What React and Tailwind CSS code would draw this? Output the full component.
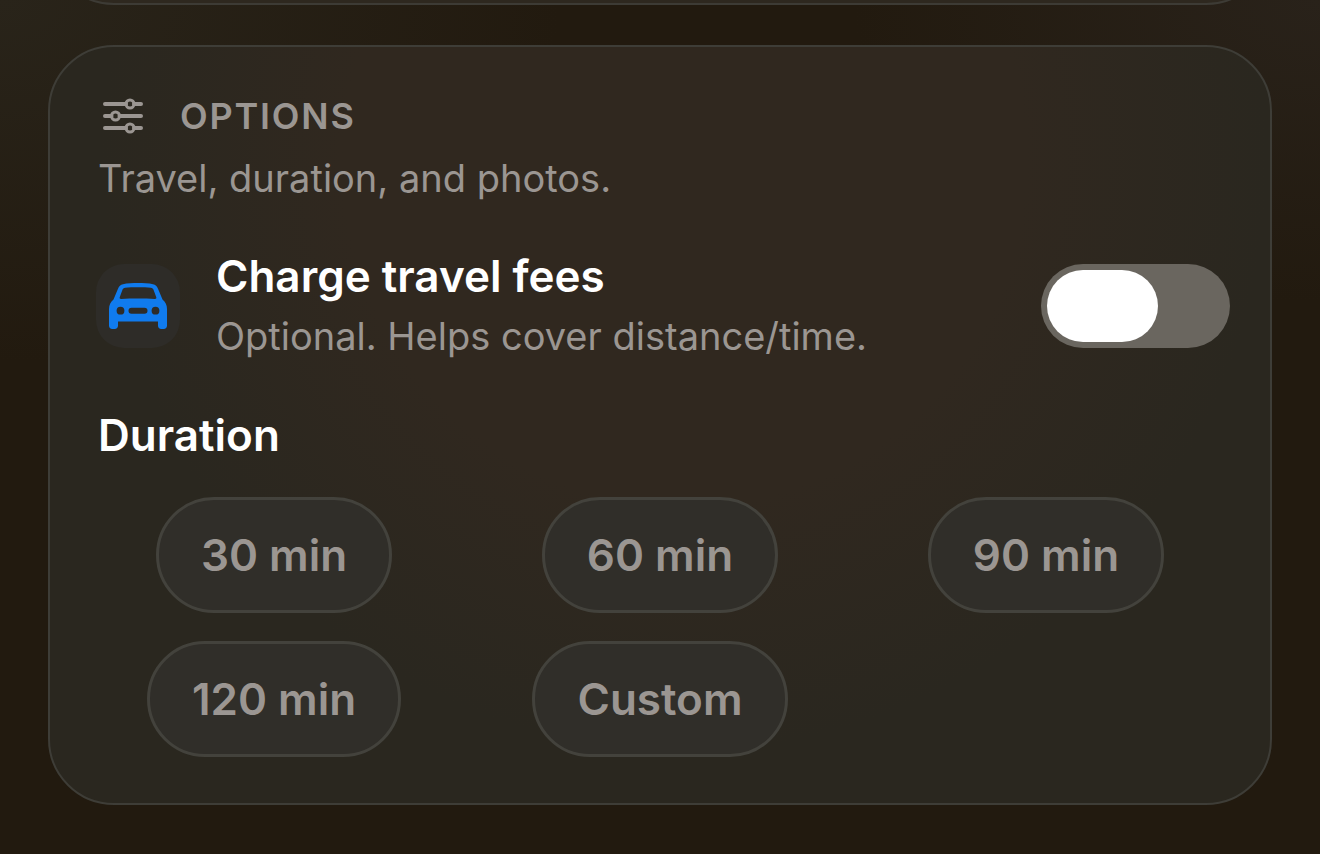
import { useState } from "react";

const durations = ["30 min", "60 min", "90 min", "120 min", "Custom"];

function SlidersIcon() {
  return (
    <svg className="h-9 w-[42px]" viewBox="0 0 42 36" fill="none" stroke="currentColor" strokeWidth="4" strokeLinecap="round" aria-hidden="true">
      <path d="M3 6H24M32 6H39M3 18H9.500M17.500 18H39M3 30H24M32 30H39" />
      <g strokeWidth="3">
        <circle cx="28" cy="6" r="4" />
        <circle cx="13.5" cy="18" r="4" />
        <circle cx="28" cy="30" r="4" />
      </g>
    </svg>
  );
}

function CarIcon() {
  return (
    <svg className="h-[46px] w-[58px]" viewBox="0 0 58 46" fill="currentColor" fillRule="evenodd" aria-hidden="true">
      <path d="M14 1.200C18 .2 24 0 29 0s11 .2 15 1.200c2.500.6 4 2 5 4.500l4.500 10.800c3 2.500 4.500 5.500 4.500 9.500v16.500c0 2-1.300 3.500-3.300 3.500h-2.400c-2 0-3.300-1.500-3.300-3.500V38.500H9v4c0 2-1.300 3.500-3.300 3.500H3.300C1.300 46 0 44.500 0 42.500V26c0-4 1.500-7 4.500-9.500L9 5.700c1-2.500 2.500-3.900 5-4.500Z
        M16.200 4.800c-1.500.2-2.300.9-2.800 2.100l-2.600 7c-.5 1.300.1 2.100 1.500 2 5-.4 11.200-.5 16.700-.5s11.700.1 16.700.5c1.400.1 2-.7 1.500-2l-2.600-7c-.5-1.200-1.300-1.900-2.800-2.100-3.400-.4-8.300-.5-12.800-.5s-9.400.1-12.800.5Z
        M11.500 23.800a3.900 3.900 0 1 0 0 7.800 3.900 3.900 0 0 0 0-7.800Z
        M46.500 23.800a3.900 3.900 0 1 0 0 7.800 3.900 3.900 0 0 0 0-7.800Z
        M22.500 24.800a3 3 0 0 0 0 6h13a3 3 0 0 0 0-6Z" />
    </svg>
  );
}

function Switch({ id, checked, onChange }) {
  return (
    <input
      id={id}
      type="checkbox"
      role="switch"
      checked={checked}
      onChange={onChange}
      className="-mr-2 h-[84px] w-[189px] shrink-0 cursor-pointer appearance-none rounded-full bg-[#6a665f] p-1.5 before:block before:h-full before:w-[111px] before:rounded-full before:bg-white before:transition-transform checked:bg-[#34c759] checked:before:translate-x-[66px]"
    />
  );
}

export default function App() {
  const [travelFees, setTravelFees] = useState(false);
  const [duration, setDuration] = useState(null);

  return (
    <main className="min-h-screen bg-[#221a0f] bg-[radial-gradient(ellipse_at_top_left,#29241a,#221a0f00_30%),radial-gradient(ellipse_at_top_right,#29221a,#221a0f00_25%)] px-12 pb-12 font-['Inter','Liberation_Sans',sans-serif] text-[#9b9692]">
      <div className="h-[5px] overflow-hidden">
        <div className="-mt-[155px] h-40 rounded-[66px] border-2 border-[#3d3b35] bg-[#2e281f]" />
      </div>

      <section className="mt-10 rounded-[66px] border-2 border-[#3e3d37] bg-[#2a271f] bg-[radial-gradient(ellipse_at_52%_15%,#30281f_38%,#2a271f_65%)] px-12 pt-12 pb-[46px]">
        <header>
          <h2 className="flex h-[42px] items-center gap-9 pl-1 text-[36px] font-semibold tracking-wider">
            <SlidersIcon />
            OPTIONS
          </h2>
          <p className="mt-[17px] text-[38px] leading-12">Travel, duration, and photos.</p>
        </header>

        <div className="mt-[46px] flex items-center">
          <div className="-ml-0.5 flex size-[84px] shrink-0 items-center justify-center rounded-[28px] bg-[#2e2c28] text-[#107bee]">
            <CarIcon />
          </div>
          <div className="ml-9 flex-1">
            <label htmlFor="travel-fees" className="block text-[44px] leading-14 font-semibold text-white">
              Charge travel fees
            </label>
            <p className="mt-1 text-[38px] leading-14">Optional. Helps cover distance/time.</p>
          </div>
          <Switch id="travel-fees" checked={travelFees} onChange={(e) => setTravelFees(e.target.checked)} />
        </div>

        <h3 className="mt-[43px] text-[44px] leading-14 font-semibold text-white">Duration</h3>

        <div className="mt-[34px] grid grid-cols-3 justify-items-center gap-x-[34px] gap-y-7">
          {durations.map((label) => (
            <button
              key={label}
              type="button"
              aria-pressed={duration === label}
              onClick={() => setDuration(label)}
              className="h-[116px] rounded-full border-3 border-[#43423c] bg-[#302e29] px-[42px] text-[44px] font-semibold whitespace-nowrap aria-pressed:text-white"
            >
              {label}
            </button>
          ))}
        </div>
      </section>
    </main>
  );
}
